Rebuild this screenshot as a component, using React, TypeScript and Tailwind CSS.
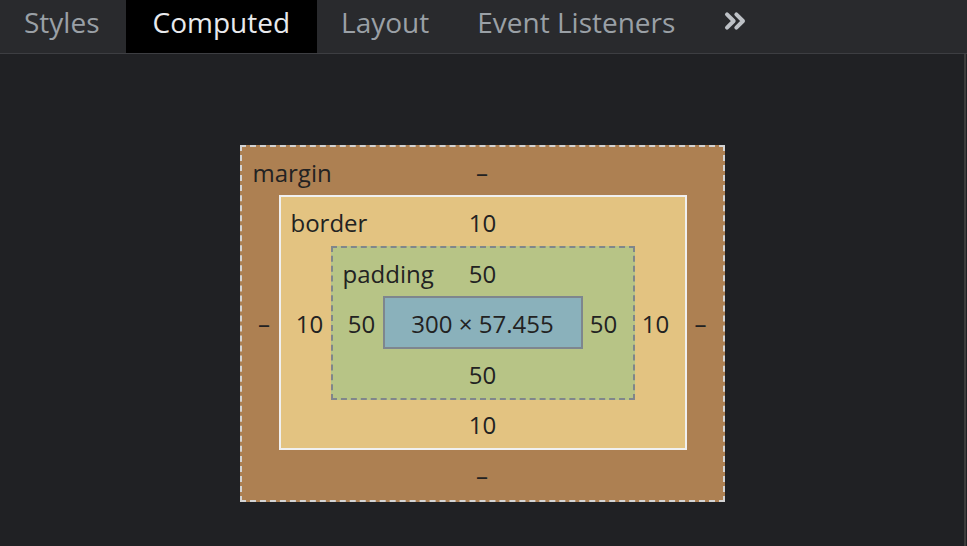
import { ChevronsRight } from "lucide-react";

const tabs = ["Styles", "Computed", "Layout", "Event Listeners"];

function Side({ value, w, left }: { value: string; w: string; left?: boolean }) {
  return (
    <div className={`${w} ${left ? "pl-[8px]" : "pr-[8px]"} flex items-center justify-center pt-[2px]`}>
      {value}
    </div>
  );
}

export default function App() {
  return (
    <div
      className="w-[967px] h-[546px] bg-[#202124] flex flex-col overflow-hidden"
      style={{ fontFamily: '"Open Sans", "Noto Sans", sans-serif' }}
    >
      {/* tab strip */}
      <div className="h-[54px] bg-[#292a2d] border-b border-[#3d3e42] flex items-stretch shrink-0">
        {tabs.map((t, i) => (
          <div
            key={t}
            className={
              t === "Computed"
                ? "px-[27px] flex items-center pb-[9px] bg-black text-[#e8eaed] text-[28px] h-[53px]"
                : i === 0
                ? "pl-[24px] pr-[26px] flex items-center pb-[9px] text-[#9aa0a6] text-[28px] h-[53px]"
                : "px-[24px] flex items-center pb-[9px] text-[#9aa0a6] text-[28px] h-[53px]"
            }
          >
            {t}
          </div>
        ))}
        <div className="flex items-center pl-[20px] text-[#bdc1c6] h-[53px] pb-[12px]">
          <ChevronsRight size={32} strokeWidth={3} />
        </div>
      </div>

      <div className="flex-1 flex">
        <div className="flex-1 flex items-start justify-center pt-[91px]">
          {/* margin */}
          <div className="w-[485px] border-2 border-dashed border-[#d4d4d4] bg-[#ad8052] text-[#222] text-[24px] leading-none flex flex-col">
            <div className="h-[48px] pt-[3px] grid grid-cols-[1fr_auto_1fr] items-center">
              <span className="pl-[11px]">margin</span>
              <span>–</span>
              <span />
            </div>
            <div className="flex">
              <Side value="–" w="w-[37px]" left />
              {/* border */}
              <div className="w-[408px] border-2 border-[#f0f0f0] bg-[#e3c381] flex flex-col">
                <div className="h-[49px] pt-[2px] grid grid-cols-[1fr_auto_1fr] items-center">
                  <span className="pl-[10px]">border</span>
                  <span>10</span>
                  <span />
                </div>
                <div className="flex">
                  <Side value="10" w="w-[50px]" left />
                  {/* padding */}
                  <div className="w-[304px] border-2 border-dashed border-[#80868b] bg-[#b7c486] flex flex-col">
                    <div className="h-[48px] pt-[3px] grid grid-cols-[1fr_auto_1fr] items-center">
                      <span className="pl-[10px]">padding</span>
                      <span>50</span>
                      <span />
                    </div>
                    <div className="flex">
                      <Side value="50" w="w-[50px]" left />
                      {/* content */}
                      <div className="w-[200px] h-[53px] pt-[2px] border-2 border-[#7e868e] bg-[#8ab1bb] flex items-center justify-center">
                        300 × 57.455
                      </div>
                      <Side value="50" w="w-[50px]" />
                    </div>
                    <div className="h-[49px] pt-[2px] flex items-center justify-center">50</div>
                  </div>
                  <Side value="10" w="w-[50px]" />
                </div>
                <div className="h-[48px] pt-[2px] flex items-center justify-center">10</div>
              </div>
              <Side value="–" w="w-[36px]" />
            </div>
            <div className="h-[50px] pt-[2px] flex items-center justify-center">–</div>
          </div>
        </div>
        <div className="w-[3px] border-l-2 border-[#3c3c3c]" />
      </div>
    </div>
  );
}
